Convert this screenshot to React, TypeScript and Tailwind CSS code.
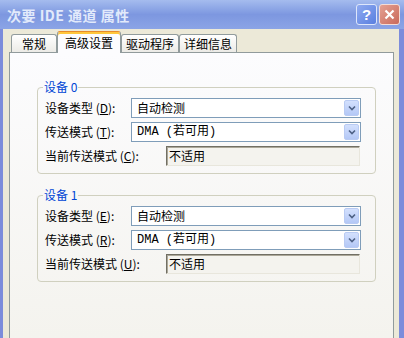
import React from 'react';

const cjk = "font-['SimSun','Noto_Sans_CJK_SC',sans-serif]";

function Mnemonic({ text, keyChar, after = ':' }: { text: string; keyChar: string; after?: string }) {
  return (
    <span>
      {text} (<span className="underline">{keyChar}</span>){after}
    </span>
  );
}

function Combo({ value, mono }: { value: string; mono?: boolean }) {
  return (
    <div className="flex h-[20px] w-[230px] items-center border border-[#7F9DB9] bg-white">
      <span
        className={`flex-1 pl-[5px] text-[12px] leading-[14px] text-black ${
          mono ? "font-['Liberation_Mono','Noto_Sans_CJK_SC',monospace]" : ''
        }`}
      >
        {value}
      </span>
      <div className="mr-px flex h-[16px] w-[15px] items-center justify-center rounded-[2px] border border-[#B9CBF3] bg-gradient-to-b from-[#D3E0FD] to-[#B4C8F6]">
        <svg width="8" height="6" viewBox="0 0 8 6">
          <path d="M1 1.5 L4 4.5 L7 1.5" fill="none" stroke="#4D6185" strokeWidth="1.6" />
        </svg>
      </div>
    </div>
  );
}

function ReadOnly({ value }: { value: string }) {
  return (
    <div className="flex h-[20px] w-[194px] items-center border border-t-[#716F64] border-l-[#716F64] border-r-[#E8E6DC] border-b-[#E8E6DC] bg-[#F4F3EE] shadow-[inset_1px_1px_0_#ACA899]">
      <span className="pl-[2px] text-[12px] leading-[14px] text-black">{value}</span>
    </div>
  );
}

interface Device {
  title: string;
  typeKey: string;
  modeKey: string;
  curKey: string;
}

function DeviceGroup({ d }: { d: Device }) {
  return (
    <fieldset className="rounded-[4px] border border-[#D0D0BF] pb-[7px] pl-[7px] pr-[13px]">
      <legend className="-ml-[2px] px-px text-[12px] leading-[14px] text-[#0046D5]">{d.title}</legend>
      <div className="mt-[4px] flex flex-col gap-[4px]">
        <div className="flex items-center">
          <div className="w-[86px] text-[12px] leading-[14px] text-black">
            <Mnemonic text="设备类型" keyChar={d.typeKey} />
          </div>
          <Combo value="自动检测" />
        </div>
        <div className="flex items-center">
          <div className="w-[86px] text-[12px] leading-[14px] text-black">
            <Mnemonic text="传送模式" keyChar={d.modeKey} />
          </div>
          <Combo value="DMA (若可用)" mono />
        </div>
        <div className="flex items-center">
          <div className="w-[121px] text-[12px] leading-[14px] text-black">
            <Mnemonic text="当前传送模式" keyChar={d.curKey} />
          </div>
          <ReadOnly value="不适用" />
        </div>
      </div>
    </fieldset>
  );
}

const devices: Device[] = [
  { title: '设备 0', typeKey: 'D', modeKey: 'T', curKey: 'C' },
  { title: '设备 1', typeKey: 'E', modeKey: 'R', curKey: 'U' },
];

const tabs = [
  { label: '常规', w: 'w-[46px]' },
  { label: '高级设置', w: 'w-[64px]', active: true },
  { label: '驱动程序', w: 'w-[58px]' },
  { label: '详细信息', w: 'w-[58px]' },
];

export default function App() {
  return (
    <div className={`flex h-[338px] w-[404px] flex-col overflow-hidden ${cjk}`}>
      {/* title bar */}
      <div className="flex h-[29px] shrink-0 items-center bg-gradient-to-b from-[#A5BCEE] via-[#7D97E0] to-[#8BA4E6] pl-[7px] pr-[4px]">
        <span className="flex-1 text-[14px] font-bold leading-[16px] tracking-[0.5px] text-[#E2EAFB]">
          次要 IDE 通道 属性
        </span>
        <div className="flex gap-[2px]">
          <div className="flex h-[21px] w-[21px] items-center justify-center rounded-[3px] border border-[#DDE6FB] bg-gradient-to-br from-[#8FAAF0] to-[#5A7FE0]">
            <span className="font-['Liberation_Sans',sans-serif] text-[15px] font-bold leading-none text-white">?</span>
          </div>
          <div className="flex h-[21px] w-[21px] items-center justify-center rounded-[3px] border border-[#F3DCD6] bg-gradient-to-br from-[#E4A193] to-[#C9695A]">
            <svg width="11" height="11" viewBox="0 0 11 11">
              <path d="M1.5 1.5 L9.5 9.5 M9.5 1.5 L1.5 9.5" stroke="white" strokeWidth="2.2" />
            </svg>
          </div>
        </div>
      </div>

      {/* body */}
      <div className="flex flex-1 flex-col border-l-[3px] border-r-[5px] border-[#7C8CDB] bg-[#ECE9D8] pl-[6px] pr-[5px] pt-[2px]">
        <div className="relative z-10 -mb-px flex h-[22px] items-end pl-[2px]">
          {tabs.map((t) =>
            t.active ? (
              <div
                key={t.label}
                className={`${t.w} flex h-[22px] items-center justify-center rounded-t-[3px] border border-b-0 border-[#919B9C] border-t-[#E68B2C] bg-[#FCFCFE] shadow-[inset_0_2px_0_#FFC73C] text-[12px] leading-[14px] text-black`}
              >
                {t.label}
              </div>
            ) : (
              <div
                key={t.label}
                className={`${t.w} mb-px flex h-[18px] items-center justify-center rounded-t-[3px] border border-b-0 border-[#919B9C] bg-gradient-to-b from-white to-[#ECEBE6] text-[12px] leading-[14px] text-black`}
              >
                {t.label}
              </div>
            )
          )}
        </div>
        <div className="flex flex-1 flex-col gap-[14px] border border-b-0 border-[#919B9C] bg-gradient-to-b from-[#FCFCFE] to-[#F4F3EE] pl-[27px] pr-[17px] pt-[27px]">
          {devices.map((d) => (
            <DeviceGroup key={d.title} d={d} />
          ))}
        </div>
      </div>
    </div>
  );
}
